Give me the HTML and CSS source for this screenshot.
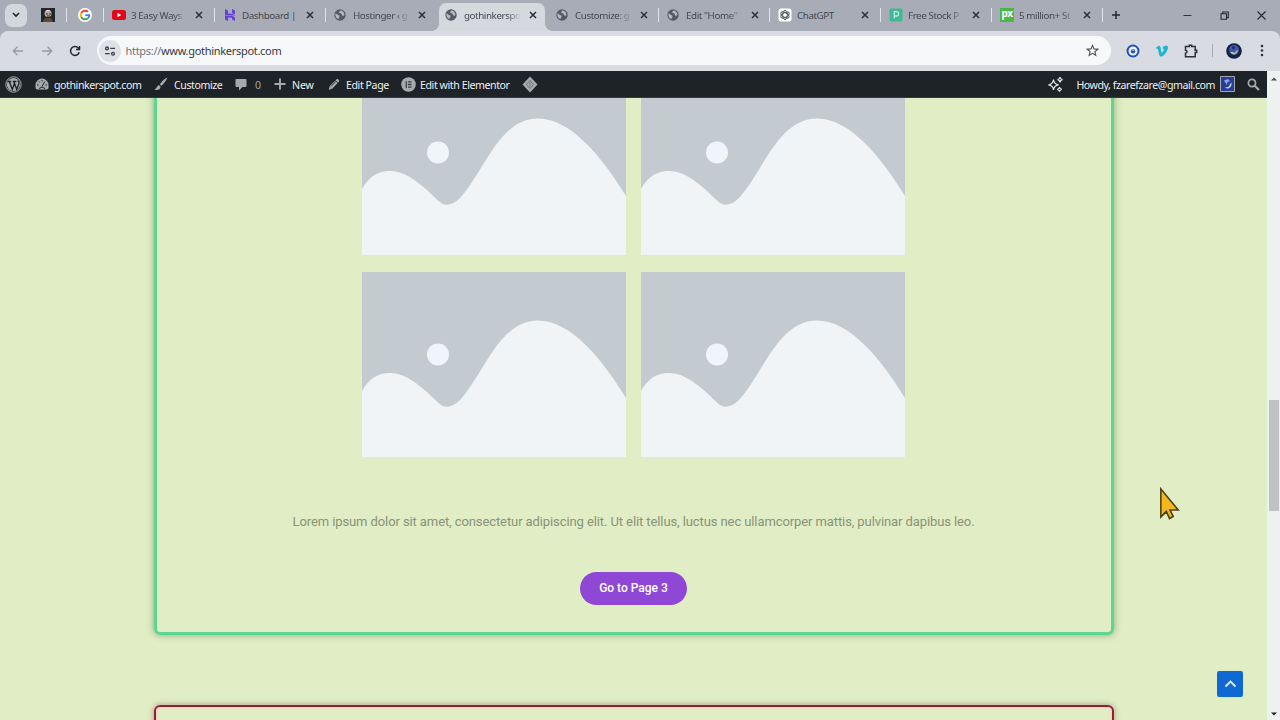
FILE: index.html
```html
<!DOCTYPE html>
<html lang="en">
<head>
<meta charset="utf-8">
<title>gothinkerspot.com</title>
<link rel="stylesheet" href="styles.css">
</head>
<body>
<svg class="defs" width="0" height="0">
  <symbol id="globe" viewBox="0 0 12 12"><circle cx="6" cy="6" r="5.7" fill="#555a64"/><path d="M1.400 4.600C2.600 4.400 3 5.800 4 6c1.200.2 1.700.8 1.500 1.700-.2.900-1 1-1 2.500C2.400 9.600 1 7.400 1.400 4.600zM6.800 1.300c-.2.900-1.700.9-1.700 2 0 1 1.500.7 2.300 1.400.7.600.4 2 1.500 2.100.6 0 1.200-.4 1.500-.9C10.500 3.600 8.800 1.900 6.800 1.300z" fill="#b4b9c3"/></symbol>
  <symbol id="close" viewBox="0 0 8 8"><path d="M1 1l6 6M7 1L1 7" stroke="#2c2f36" stroke-width="1.500"/></symbol>
  <symbol id="placeholder" viewBox="0 0 264 185.500"><path fill="#c4cbd0" d="M0 0h264v185.500H0z"/><path fill="#f0f4f7" d="M0 119C11 99 29 98 44 105C56 111 66 121 76 130.500C82 137 90 136 98 128C122 102 137 48.500 176 48.500C209 48.500 240 87 264 126V185.500H0z"/><circle cx="76" cy="82.500" r="11" fill="#f0f5f9"/></symbol>
</svg>
<div class="browser">
  <header class="tabstrip">
    <span class="tab-search"><svg width="8" height="6" viewBox="0 0 8 6"><path d="M1 1l3 3 3-3" fill="none" stroke="#22252b" stroke-width="1.600"/></svg></span>
    <span class="pin pin-first"><svg width="14" height="14" viewBox="0 0 14 14"><path fill="#24252a" d="M0 0h14v14H0z"/><circle cx="7" cy="5.500" r="3.500" fill="#b9aaa0"/><path d="M4 3.500Q7 0 10.500 4L9 3z" fill="#e5ddd4"/><path d="M2 14q1-5 5-4 4-1 5 4z" fill="#5b4a38"/><path d="M5 6h2M8 6h2M6 8h3" stroke="#3a2e2c"/></svg></span>
    <span class="pin"><svg width="14" height="14" viewBox="0 0 14 14"><circle cx="7" cy="7" r="7" fill="#fff"/><g fill="none" stroke-width="1.900"><path d="M10 3.900A4.300 4.300 0 0 0 3.200 5" stroke="#e54335"/><path d="M3.200 5a4.400 4.400 0 0 0 0 4" stroke="#f6b704"/><path d="M3.200 9a4.300 4.300 0 0 0 6.500 1.400" stroke="#34a353"/><path d="M9.700 10.400a4 4 0 0 0 1.600-3.300H7.300" stroke="#4280ef"/></g></svg></span>
    <div class="tab"><svg class="fav" viewBox="0 0 14 14"><rect y="2" width="14" height="10" rx="2.500" fill="#e3061a"/><path d="M5.500 4.800v4.400L9.300 7z" fill="#fff"/></svg><span class="label">3 Easy Ways</span><svg class="x"><use href="#close"/></svg></div>
    <div class="tab"><svg class="fav" viewBox="0 0 14 14"><path fill="#6440d8" d="M2 1l3 1.600v3l4.300.1 3 1.700H2zM9 1l3 1.600v4L9 5zM2 8h7.500L12 9.500V13l-3-1.600V9.700L5 9.600V13l-3-1.600z"/></svg><span class="label plain">Dashboard |</span><svg class="x"><use href="#close"/></svg></div>
    <div class="tab no-sep"><svg class="fav globe"><use href="#globe"/></svg><span class="label">Hostinger ‹ g</span><svg class="x"><use href="#close"/></svg></div>
    <div class="tab active"><svg class="fav globe"><use href="#globe"/></svg><span class="label">gothinkerspo</span><svg class="x"><use href="#close"/></svg></div>
    <div class="tab"><svg class="fav globe"><use href="#globe"/></svg><span class="label">Customize: g</span><svg class="x"><use href="#close"/></svg></div>
    <div class="tab"><svg class="fav globe"><use href="#globe"/></svg><span class="label">Edit "Home"</span><svg class="x"><use href="#close"/></svg></div>
    <div class="tab"><svg class="fav" viewBox="0 0 14 14"><rect x=".5" y=".5" width="13" height="13" rx="2.500" fill="#fff"/><g fill="none" stroke="#53585e" stroke-width=".9"><ellipse cx="7" cy="7" rx="2.300" ry="4.600"/><ellipse cx="7" cy="7" rx="2.300" ry="4.600" transform="rotate(60 7 7)"/><ellipse cx="7" cy="7" rx="2.300" ry="4.600" transform="rotate(120 7 7)"/></g></svg><span class="label plain">ChatGPT</span><svg class="x"><use href="#close"/></svg></div>
    <div class="tab"><svg class="fav" viewBox="0 0 14 14"><rect x=".5" y=".5" width="13" height="13" rx="2" fill="#42b795"/><path d="M5.300 10.500V3.700h2.200a2.100 2.100 0 0 1 0 4.300H5.300" fill="none" stroke="#b9efdc" stroke-width="1.300"/></svg><span class="label">Free Stock P</span><svg class="x"><use href="#close"/></svg></div>
    <div class="tab"><span class="fav px">px</span><span class="label">5 million+ St</span><svg class="x"><use href="#close"/></svg></div>
    <svg class="newtab" width="10" height="10" viewBox="0 0 10 10"><path d="M5 1v8M1 5h8" stroke="#25282e" stroke-width="1.500"/></svg>
    <div class="window-buttons">
      <svg width="9" height="9" viewBox="0 0 9 9"><path d="M.5 4.500h8" stroke="#33363c"/></svg>
      <svg width="9" height="9" viewBox="0 0 9 9"><path d="M1 2.800h5.500v5.500H1zM2.700 2.500V1h5.600v5.600H6.800" fill="none" stroke="#26292f" stroke-width="1.100"/></svg>
      <svg width="9" height="9" viewBox="0 0 9 9"><path d="M.5.5l8 8M8.500.5l-8 8" stroke="#26292f" stroke-width="1.100"/></svg>
    </div>
  </header>

  <nav class="toolbar">
    <svg class="nav" viewBox="0 0 12 12"><path d="M11 6H1.500M5.500 1.800L1.300 6l4.200 4.200" fill="none" stroke="#969aa0" stroke-width="1.300"/></svg>
    <svg class="nav" viewBox="0 0 12 12"><path d="M1 6h9.500M6.500 1.800L10.700 6l-4.200 4.200" fill="none" stroke="#969aa0" stroke-width="1.300"/></svg>
    <svg class="nav" viewBox="0 0 12 12"><path d="M10.200 7.200A4.400 4.400 0 1 1 9.300 3.100L10.300 4.200M10.500 1v3.500H7" fill="none" stroke="#26292e" stroke-width="1.500"/></svg>
    <div class="omnibox">
      <span class="site-info"><svg width="12" height="12" viewBox="0 0 12 12" fill="none" stroke="#3c4046" stroke-width="1.300"><circle cx="3" cy="3.400" r="1.400"/><path d="M6.200 3.400H11M1 8.700h4.800"/><circle cx="9" cy="8.700" r="1.400"/></svg></span>
      <span class="url"><span class="scheme">https://</span>www.gothinkerspot.com</span>
      <svg class="star" width="13" height="13" viewBox="0 0 13 13"><path d="M6.500 1.400l1.500 3.500 3.800.3-2.900 2.500.9 3.700-3.300-2-3.300 2 .9-3.700L1.200 5.200 5 4.900z" fill="none" stroke="#4a4d52" stroke-width="1.100"/></svg>
    </div>
    <div class="extensions">
      <svg width="14" height="14" viewBox="0 0 14 14"><circle cx="7" cy="7" r="5.500" fill="#eef4ff" stroke="#1e50b8" stroke-width="2"/><circle cx="7" cy="7.200" r="2.200" fill="#2354b5"/><path d="M6.500 5.500h1v1.500h-1z" fill="#fff"/></svg>
      <svg width="14" height="14" viewBox="0 0 14 14"><path d="M1 3.800C2.500 2.500 4 1 5 2.200c1 1.300 1 6.200 1.900 6.200.9 0 2.100-2.100 1.900-3.200-.2-.9-1-.7-1.500-.4C8.100 1 13.200.3 13 3.700 12.800 7 8.500 12.500 6 12.500 3.300 12.500 3.500 4.700 2.600 4.500L1.500 5z" fill="#20b4d2"/></svg>
      <svg width="14" height="14" viewBox="0 0 14 14"><path d="M1.500 2.500h3.800V1.200h2.400v1.300h3.500v3.700h1.500v2.400h-1.500v4.200H1.500V9.300c2-.2 2-2.900 0-3.100z" fill="none" stroke="#2c2f34" stroke-width="1.500"/></svg>
      <span class="rule"></span>
      <svg width="16" height="16" viewBox="0 0 16 16"><circle cx="8" cy="8" r="7.800" fill="#172047"/><circle cx="8" cy="7" r="5" fill="#3d5aaa"/><path d="M4 9c3 4 7 3 8-2l-2 1-1 2-2-1z" fill="#b7c694"/><path d="M6 4l2-1 1 2-2 2z" fill="#18245c"/></svg>
      <svg class="menu" width="4" height="13" viewBox="0 0 4 13" fill="#303338"><circle cx="2" cy="2" r="1.300"/><circle cx="2" cy="6.500" r="1.300"/><circle cx="2" cy="11" r="1.300"/></svg>
    </div>
  </nav>

  <div class="viewport">
    <div class="site">
      <div class="adminbar">
        <svg class="wp" width="17" height="17" viewBox="0 0 17 17"><circle cx="8.500" cy="8.500" r="7.700" fill="none" stroke="#a7aaad"/><circle cx="8.500" cy="8.500" r="6.600" fill="#a7aaad"/><path d="M2.700 5.500h3.500M4.300 5.500l3 8 2-5.800M7.800 5.500h3.500M8.800 5.500l3 8 2.200-6.500-1.200-2.500" fill="none" stroke="#1d2327" stroke-width="1.300"/></svg>
        <div class="item site-name"><svg width="14" height="12" viewBox="0 0 14 12"><path d="M7 .6A6.500 6.500 0 0 0 .5 7v3.300l1.300 1.200h10.400l1.300-1.200V7A6.500 6.500 0 0 0 7 .6z" fill="#a7aaad"/><path d="M7 8.500L9.800 3.500M2 7h1.500M4 3.500l.8 1M7 2v1.300M10.500 7H12M4 10.500q3-3 6 0" stroke="#1d2327" fill="none"/></svg><span>gothinkerspot.com</span></div>
        <div class="item customize"><svg width="14" height="14" viewBox="0 0 14 14"><path d="M13.500.4C10 2 7.500 4.500 5.800 7.500l1.500 1.200C9.800 7 12 4 13.500.4zM5 8.200c-2 0-1.700 2.800-4.500 4.300 2.500 1.200 6.300.3 6-3z" fill="#a7aaad"/></svg><span>Customize</span></div>
        <div class="item comments"><svg width="12" height="13" viewBox="0 0 12 13"><path d="M1.500 1h9q1 0 1 1v6q0 1-1 1H7.500L4 12.500V9H1.500q-1 0-1-1V2q0-1 1-1z" fill="#a7aaad"/></svg><span>0</span></div>
        <div class="item new"><svg width="12" height="12" viewBox="0 0 12 12"><path d="M6 .5v11M.5 6h11" stroke="#a7aaad" stroke-width="1.900"/></svg><span>New</span></div>
        <div class="item edit"><svg width="12" height="13" viewBox="0 0 12 13"><path d="M8.600 1.200q.7-.7 1.400 0l1 1q.7.700 0 1.400L4.500 10.600.8 12l1-4z" fill="#a7aaad"/><path d="M7.300 2.400l2.600 2.700M3 8.400l5-5.200" stroke="#1d2327" stroke-width=".8"/></svg><span>Edit Page</span></div>
        <div class="item elementor"><svg width="15" height="15" viewBox="0 0 15 15"><circle cx="7.500" cy="7.500" r="7.300" fill="#a7aaad"/><path d="M5.300 4.200v6.600M7 4.900h3.500M7 7.500h3.500M7 10.100h3.500" stroke="#3a4045" stroke-width="1.300"/></svg><span>Edit with Elementor</span></div>
        <svg class="diamond" width="16" height="17" viewBox="0 0 16 17"><path d="M8 .5l7.500 8L8 16.500.5 8.500z" fill="#a7aaad"/><path d="M8 4.500l3.500 4L8 12.500 4.500 8.500z" fill="none" stroke="#6c7175"/><path d="M8 6.500v4" stroke="#6c7175"/></svg>
        <div class="account"><svg width="17" height="17" viewBox="0 0 17 17" fill="none" stroke="#e5e7e8" stroke-width="1.200"><path d="M6.500 3.500Q7 8 11.500 8.800 7 9.500 6.500 14 6 9.500 1.500 8.800 6 8 6.500 3.500zM13 1q.3 2.300 2.500 2.700Q13.300 4.100 13 6.400q-.3-2.300-2.500-2.700Q12.700 3.300 13 1zM12.500 11q.3 2 2.300 2.300-2 .3-2.300 2.400-.3-2.100-2.300-2.400 2-.3 2.300-2.300z"/></svg><span class="howdy">Howdy, fzarefzare@gmail.com</span><svg width="15" height="16" viewBox="0 0 15 16"><path d="M.5.5h14v15H.5z" fill="#263d99" stroke="#a3a6aa"/><path d="M5 11q4 1 5-3l1.500-1.500Q12 11 8.500 12.500 6 13 5 11z" fill="#c3ccc9"/><path d="M4 4.500l4-1.500 2 2-2.500 1L7 9z" fill="#91a5e4"/></svg><svg class="search" width="13" height="13" viewBox="0 0 13 13"><circle cx="5" cy="5" r="3.600" fill="none" stroke="#a7aaad" stroke-width="1.700"/><path d="M7.700 7.700l4.300 4.300" stroke="#a7aaad" stroke-width="2.200"/></svg></div>
      </div>
      <main class="page">
        <section class="card card-green">
          <div class="gallery">
            <svg><use href="#placeholder"/></svg><svg><use href="#placeholder"/></svg>
            <svg><use href="#placeholder"/></svg><svg><use href="#placeholder"/></svg>
          </div>
          <p class="lorem">Lorem ipsum dolor sit amet, consectetur adipiscing elit. Ut elit tellus, luctus nec ullamcorper mattis, pulvinar dapibus leo.</p>
          <a class="button">Go to Page 3</a>
        </section>
        <section class="card card-red"></section>
        <span class="to-top"><svg width="13" height="8" viewBox="0 0 13 8"><path d="M1.500 6.500l5-5 5 5" fill="none" stroke="#d5efff" stroke-width="1.800"/></svg></span>
        <svg class="cursor" width="22" height="34" viewBox="0 0 24 34" preserveAspectRatio="none"><path d="M2 2v28l6-5.500 3.500 7 4-2-3.500-6.500h9z" fill="#f4b81c" stroke="#4e4214" stroke-width="1.700"/></svg>
      </main>
    </div>
    <div class="scrollbar"><svg width="6" height="4" viewBox="0 0 6 4"><path d="M0 3.500h6L3 .5z" fill="#4b4d50"/></svg><span class="thumb"></span><svg class="down" width="6" height="4" viewBox="0 0 6 4"><path d="M0 .5h6L3 3.500z" fill="#202225"/></svg></div>
  </div>
</div>
</body>
</html>
```
FILE: styles.css
```css
* { box-sizing: border-box; }
body { margin: 0; overflow: hidden; font-family: "Noto Sans", "Open Sans", sans-serif; }
svg { display: block; flex: none; }
.defs { position: absolute; }
.browser { width: 1280px; height: 720px; display: flex; flex-direction: column; overflow: hidden; background: #a8acb7; }

.tabstrip { height: 31px; flex: none; display: flex; align-items: center; padding-bottom: 1px; }
.tab-search { width: 22px; height: 23px; margin-left: 5px; border-radius: 7px; background: #d3d7dd; display: grid; place-items: center; flex: none; }
.pin { width: 37px; height: 14px; border-right: 1px solid #e0e3e8; padding-left: 11px; flex: none; }
.pin-first { width: 40px; padding-left: 14px; }
.tab { position: relative; width: 111px; height: 28px; padding-left: 8px; display: flex; align-items: center; flex: none; font-size: 9.800px; color: #454952; }
.tab::after { content: ""; width: 1px; height: 14px; margin-left: auto; background: #e0e3e8; }
.tab.no-sep::after, .tab.active::after { background: transparent; }
.tab.active { height: 28px; margin: 4px 3px 0 2px; width: 106px; padding-left: 6px; border-radius: 7px 7px 0 0; background: #d5d9de; padding-bottom: 4px; }
.tab.active::before { content: ""; position: absolute; left: -7px; right: -7px; bottom: 0; height: 7px; background: radial-gradient(circle at 0 0, transparent 6.500px, #d5d9de 7px) left / 7px 7px no-repeat, radial-gradient(circle at 100% 0, transparent 6.500px, #d5d9de 7px) right / 7px 7px no-repeat; }
.fav { width: 14px; height: 14px; }
.fav.globe { width: 12px; height: 12px; margin: 0 1px 0 0; }
.px { display: block; background: #4fb548; color: #fff; font-weight: bold; font-size: 10px; line-height: 11px; text-align: center; letter-spacing: -.5px; }
.label { width: 57px; margin-left: 5px; white-space: nowrap; letter-spacing: -.42px; mask-image: linear-gradient(90deg, #000 75%, transparent 100%); }
.globe + .label { margin-left: 6px; }
.label.plain { mask-image: none; }
.x { width: 8px; height: 8px; margin-left: 7px; }
.globe ~ .x { margin-left: 8px; }
.newtab { margin-left: 8px; }
.window-buttons { margin-left: auto; padding-right: 14px; display: flex; gap: 28px; }

.toolbar { height: 40px; flex: none; display: flex; align-items: center; background: #d8dbe1; border-radius: 8px 8px 0 0; padding: 0 0 1px 12px; }
.nav { width: 12px; height: 12px; margin-right: 17px; }
.nav + .nav + .nav { margin-left: -1px; margin-right: 18px; }
.omnibox { width: 1014px; height: 29px; margin-left: -2px; border-radius: 15px; background: #f7f8fa; display: flex; align-items: center; }
.site-info { width: 22px; height: 22px; margin-left: 2px; border-radius: 50%; background: #dee1e6; display: grid; place-items: center; }
.url { margin-left: 4.500px; font-size: 11px; letter-spacing: -.3px; color: #34383d; }
.scheme { color: #707479; }
.star { margin-left: auto; margin-right: 12px; }
.extensions { flex: 1; display: flex; align-items: center; padding-left: 15px; }
.extensions svg { margin-right: 15px; }
.rule { width: 1px; height: 13px; background: #a6aab2; margin-left: -1px; margin-right: 13px; }
.extensions .menu { margin: 0 0 0 3px; }

.viewport { flex: 1; min-height: 0; display: flex; }
.site { flex: 1; min-width: 0; display: flex; flex-direction: column; }
.adminbar { height: 27px; flex: none; background: #1d2327; color: #eef0f1; display: flex; align-items: center; font-size: 10.600px; letter-spacing: -.42px; white-space: nowrap; padding-left: 5px; border-bottom: 1px solid #343a38; }
.adminbar span { padding-top: 1px; }
.item { display: flex; align-items: center; gap: 5px; }
.wp { margin-right: 13px; }
.site-name { width: 119px; }
.customize { width: 81px; gap: 6px; }
.comments { width: 39px; gap: 8px; }
.comments span { color: #9da1a5; }
.new { width: 54px; gap: 6px; }
.new span { letter-spacing: -.1px; }
.edit { width: 73px; gap: 6px; }
.elementor { width: 121px; gap: 4px; }
.account { margin-left: auto; display: flex; align-items: center; }
.howdy { margin: 0 5px 0 12px; letter-spacing: -.44px; }
.search { margin: 0 7px 0 12px; }

.page { position: relative; flex: 1; min-height: 0; overflow: hidden; background: #e1edc4; display: flex; flex-direction: column; align-items: center; }
.card { flex: none; width: 960px; border: 3px solid; border-radius: 6px; display: flex; flex-direction: column; align-items: center; }
.card-green { height: 577px; margin-top: -40px; border-color: #5fd592; box-shadow: 0 0 7px rgba(55, 95, 65, .5); padding-top: 9px; }
.card-red { height: 90px; margin-top: 70px; border-width: 2px; border-color: #8f2038; box-shadow: 0 0 6px rgba(90, 50, 50, .45), inset 0 0 2px 1px #ffc5c2; }
.gallery { display: grid; grid-template-columns: 264px 264px; column-gap: 15px; row-gap: 16px; }
.gallery svg { width: 264px; height: 185.500px; }
.lorem { margin: 55px 0 0; font: 13px/20px Roboto, sans-serif; letter-spacing: -.095px; color: #88937a; white-space: nowrap; }
.button { margin-top: 40px; width: 107px; height: 33px; border-radius: 17px; background: #8f48d6; color: #fff; font: 500 12px/33px Roboto, sans-serif; text-align: center; }
.to-top { position: absolute; left: 1217px; top: 573px; width: 26px; height: 26px; border-radius: 2px; background: #1069d3; display: grid; place-items: center; }
.cursor { position: absolute; left: 1159px; top: 389px; }

.scrollbar { width: 13px; flex: none; background: #eff1f1; display: flex; flex-direction: column; align-items: center; padding: 6px 0 4px; }
.thumb { width: 10px; height: 111px; margin-top: 319px; background: #c0c1c2; }
.down { margin-top: auto; }
```
